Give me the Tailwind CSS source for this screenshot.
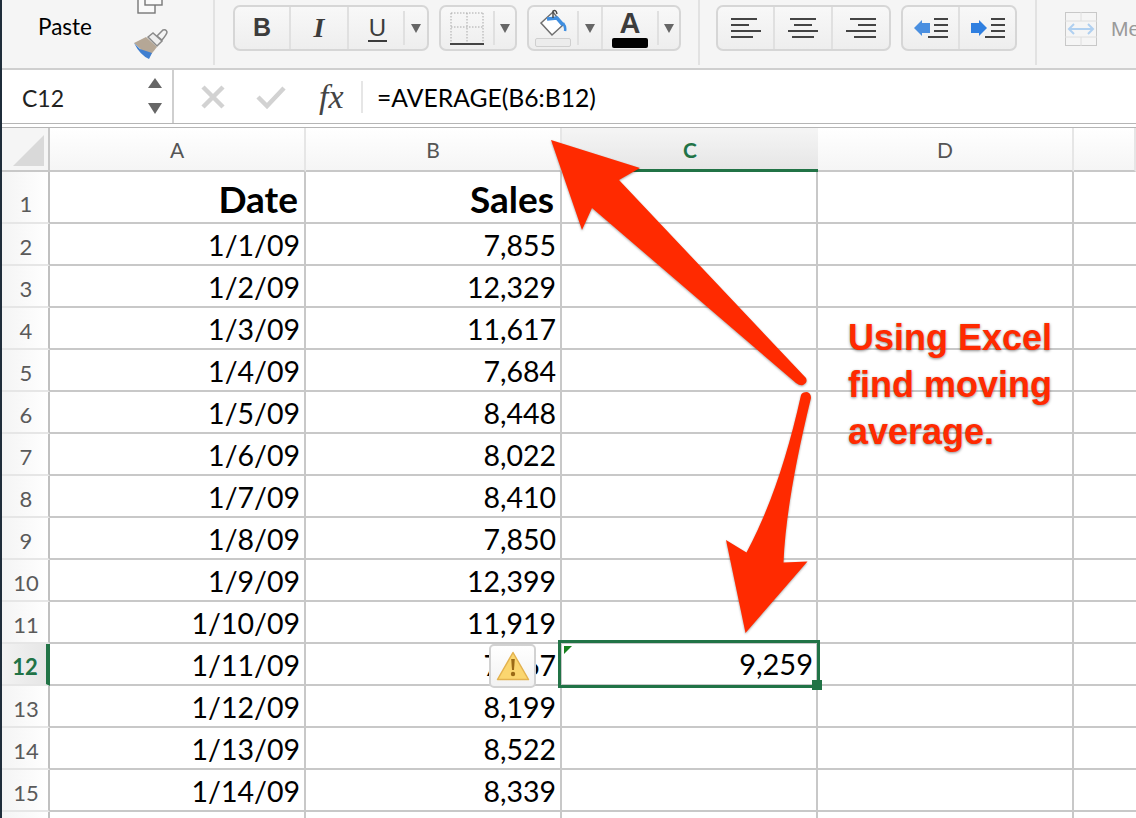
<!DOCTYPE html>
<html lang="en">
<head>
  <meta charset="UTF-8">
  <title>Moving average in Excel</title>
  <script src="https://cdn.jsdelivr.net/npm/@tailwindcss/browser@4"></script>
</head>
<body class="bg-white">
  <div class="relative flex w-[1136px] h-[818px] overflow-hidden font-['Lato',sans-serif]">
    <!-- window edge -->
    <div class="w-[2px] shrink-0 bg-[#1f2d3a]"></div>

    <div class="flex-1 flex flex-col min-w-0">
      <!-- ribbon -->
      <div class="flex h-[70px] shrink-0 bg-[#f5f5f5] border-b-2 border-[#cfcfcf]">
        <div class="relative w-[213px] shrink-0 border-r-2 border-[#e2e2e2] mb-[3px]">
          <span class="absolute left-[36px] top-[14px] text-[22.500px] leading-[26px] text-black">Paste</span>
          <svg class="absolute left-[134px] top-0" width="32" height="14" viewBox="0 0 32 14" fill="#fafafa" stroke="#777" stroke-width="1.4"><rect x="2" y="-6" width="17" height="19"/><rect x="9" y="-10" width="17" height="15"/></svg>
          <svg class="absolute left-[129px] top-[28px]" width="38" height="32" viewBox="0 0 38 32">
            <path d="M26 8 L32 2 Q35 1 36 4 Q36 6 31 12 Z" fill="#f4f4f4" stroke="#8a8a8a" stroke-width="1.5"/>
            <path d="M17 9 L22 5 L31 13 L26 18 Z" fill="#eeeeee" stroke="#8a8a8a" stroke-width="1.5"/>
            <path d="M3 15 L15 9 L26 19 L18 29 Z" fill="#b5a796"/>
            <path d="M3 15 L9 21 L21 25 L18 31 Q9 27 3 15 Z" fill="#3f7fd0"/>
          </svg>
        </div>

        <!-- bold, italic, underline -->
        <div class="ml-[18px] mt-[5px] flex shrink-0 w-[196px] h-[46px] rounded-[7px] border-2 border-[#d6d6d6] bg-linear-to-b from-[#f8f8f8] to-[#eeeeee]">
          <div class="w-[56px] flex items-center justify-center border-r-2 border-[#e0e0e0] font-['Liberation_Sans',sans-serif] font-bold text-[25px] text-[#3c3c3c]">B</div>
          <div class="w-[58px] flex items-center justify-center border-r-2 border-[#e0e0e0] font-['Liberation_Serif',serif] italic font-bold text-[28px] text-[#3c3c3c]">I</div>
          <div class="w-[54px] flex items-center justify-center pl-[3px]"><span class="font-['Liberation_Sans',sans-serif] text-[24px] leading-[25px] text-[#3c3c3c] border-b-2 border-[#3c3c3c] px-[1px]">U</span></div>
          <div class="my-[4px] border-l-2 border-[#e0e0e0]"></div>
          <div class="flex-1 flex items-center justify-center"><svg width="10" height="9"><path d="M0 0H10L5 9Z" fill="#666"/></svg></div>
        </div>

        <!-- borders -->
        <div class="ml-[10px] mt-[5px] flex shrink-0 w-[78px] h-[46px] rounded-[7px] border-2 border-[#d6d6d6] bg-linear-to-b from-[#f8f8f8] to-[#eeeeee]">
          <div class="w-[52px] flex items-center justify-center">
            <svg width="36" height="36" viewBox="0 0 36 36" fill="none" stroke="#a8a8a8" stroke-width="1" stroke-dasharray="1.5 1.5"><path d="M2 3H34M2 3V32M34 3V32M18 3V32M2 17H34"/><path d="M1 34H35" stroke="#444" stroke-width="2" stroke-dasharray="none"/></svg>
          </div>
          <div class="my-[4px] border-l-2 border-[#e0e0e0]"></div>
          <div class="flex-1 flex items-center justify-center"><svg width="10" height="9"><path d="M0 0H10L5 9Z" fill="#666"/></svg></div>
        </div>

        <!-- fill and font colour -->
        <div class="ml-[10px] mt-[5px] flex shrink-0 w-[154px] h-[46px] rounded-[7px] border-2 border-[#d6d6d6] bg-linear-to-b from-[#f8f8f8] to-[#eeeeee]">
          <div class="w-[48px] flex flex-col items-center pt-[2px]">
            <svg width="28" height="28" viewBox="0 0 28 28" fill="none"><path d="M2 14 L14 3 L24 16 L13 26 Z" fill="#fff" stroke="#6f6f6f" stroke-width="1.5"/><path d="M8 10 L18 9 L24 16" stroke="#3f8ee0" stroke-width="3.5"/><path d="M24 14 Q27 18 26 22" stroke="#3f8ee0" stroke-width="2.5"/><path d="M14 9 V2 Q17 0 18 5" stroke="#444" stroke-width="1.4"/></svg>
            <div class="w-[36px] h-[9px] mt-[1px] rounded-[2px] border border-[#cfcfcf] bg-[#ececec]"></div>
          </div>
          <div class="my-[4px] border-l-2 border-[#e0e0e0]"></div>
          <div class="w-[22px] flex items-center justify-center"><svg width="10" height="9"><path d="M0 0H10L5 9Z" fill="#666"/></svg></div>
          <div class="w-[56px] border-l-2 border-[#e0e0e0] flex flex-col items-center">
            <span class="font-['Liberation_Sans',sans-serif] font-bold text-[29px] leading-[29px] mt-[2px] text-[#3c3c3c]">A</span>
            <div class="w-[36px] h-[10px] rounded-[2px] bg-black"></div>
          </div>
          <div class="my-[4px] border-l-2 border-[#e0e0e0]"></div>
          <div class="flex-1 flex items-center justify-center"><svg width="10" height="9"><path d="M0 0H10L5 9Z" fill="#666"/></svg></div>
        </div>

        <div class="ml-[17px] mb-[3px] shrink-0 border-l-2 border-[#e2e2e2]"></div>

        <!-- alignment -->
        <div class="ml-[16px] mt-[5px] flex shrink-0 w-[175px] h-[46px] rounded-[7px] border-2 border-[#d6d6d6] bg-linear-to-b from-[#f8f8f8] to-[#eeeeee]">
          <div class="w-[57px] flex items-center justify-center border-r-2 border-[#e0e0e0]">
            <svg width="30" height="22" viewBox="0 0 30 22" stroke="#444" stroke-width="2"><path d="M0 2H26M0 8H18M0 14H30M0 20H22"/></svg>
          </div>
          <div class="w-[58px] flex items-center justify-center border-r-2 border-[#e0e0e0]">
            <svg width="30" height="22" viewBox="0 0 30 22" stroke="#444" stroke-width="2"><path d="M2 2H28M6 8H24M0 14H30M4 20H26"/></svg>
          </div>
          <div class="flex-1 flex items-center justify-center">
            <svg width="30" height="22" viewBox="0 0 30 22" stroke="#444" stroke-width="2"><path d="M4 2H30M12 8H30M0 14H30M8 20H30"/></svg>
          </div>
        </div>

        <!-- indent -->
        <div class="ml-[10px] mt-[5px] flex shrink-0 w-[116px] h-[46px] rounded-[7px] border-2 border-[#d6d6d6] bg-linear-to-b from-[#f8f8f8] to-[#eeeeee]">
          <div class="w-[57px] flex items-center justify-center border-r-2 border-[#e0e0e0]">
            <svg width="34" height="22" viewBox="0 0 34 22"><path d="M0 11L8 3V6H16V16H8V19Z" fill="#4a8fe0"/><path d="M20 2H34M20 8H34M20 14H34M14 20H34" stroke="#444" stroke-width="2"/></svg>
          </div>
          <div class="flex-1 flex items-center justify-center">
            <svg width="34" height="22" viewBox="0 0 34 22"><path d="M16 11L8 3V6H0V16H8V19Z" fill="#2f7fe0"/><path d="M20 2H34M20 8H34M20 14H34M14 20H34" stroke="#444" stroke-width="2"/></svg>
          </div>
        </div>

        <div class="ml-[18px] mb-[3px] shrink-0 border-l-2 border-[#e2e2e2]"></div>

        <!-- merge -->
        <div class="ml-[28px] mt-[12px] w-[32px] h-[34px] shrink-0">
          <svg width="32" height="34" viewBox="0 0 32 34" fill="none"><rect x=".5" y=".5" width="31" height="33" stroke="#c8c8c8"/><path d="M0 9H32M0 25H32M16 0V9M16 25V34" stroke="#dedede"/><path d="M4 17H28M9 12L4 17L9 22M23 12L28 17L23 22" stroke="#b0d0f0" stroke-width="2"/></svg>
        </div>
        <span class="ml-[14px] mt-[16px] shrink-0 text-[21px] leading-[26px] text-[#9a9a9a] font-['Liberation_Sans',sans-serif]">Me</span>
      </div>

      <!-- formula bar -->
      <div class="flex items-center h-[53px] shrink-0 bg-white">
        <div class="relative flex items-center w-[172px] h-full border-r-2 border-[#cfcfcf] pl-[20px] pt-[3px] text-[23px] text-[#222]">
          C12
          <svg class="absolute left-[146px] top-[8px]" width="14" height="36" viewBox="0 0 14 36" fill="#666"><path d="M7 0L14 10H0Z"/><path d="M0 25H14L7 36Z"/></svg>
        </div>
        <svg class="ml-[27px]" width="24" height="24" viewBox="0 0 24 24" stroke="#d2d2d2" stroke-width="4.5" fill="none"><path d="M2 2L22 22M22 2L2 22"/></svg>
        <svg class="ml-[31px]" width="30" height="24" viewBox="0 0 30 24" stroke="#d2d2d2" stroke-width="4.5" fill="none"><path d="M2 12L11 21L28 3"/></svg>
        <span class="ml-[33px] w-[42px] font-['Liberation_Serif',serif] italic text-[34px] leading-[30px] text-[#444]">fx</span>
        <div class="w-[2px] h-[32px] bg-[#e6e6e6]"></div>
        <span class="ml-[14px] pt-[3px] text-[24.700px] text-black">=AVERAGE(B6:B12)</span>
      </div>

      <!-- double rule -->
      <div class="h-[5px] shrink-0 border-y border-[#b5b5b5] bg-white"></div>

      <!-- sheet -->
      <div id="sheet" class="grid grid-cols-[48px_256px_256px_256px_256px_1fr] grid-rows-[44px_52px_repeat(15,42px)] flex-1 min-h-0"></div>
    </div>

    <!-- warning button beside the cell -->
    <div class="absolute left-[489px] top-[644px] flex items-center justify-center w-[47px] h-[44px] rounded-[5px] border-2 border-[#d2d2d2] bg-linear-to-b from-white to-[#f2f2f2]">
      <svg width="34" height="30" viewBox="0 0 34 30"><path d="M17 1.500 L32.500 28.500 H1.500 Z" fill="#fbd66f" stroke="#e3b24f" stroke-width="1.500" stroke-linejoin="round"/><path d="M15.200 8H18.800L18 19H16Z" fill="#9b6a16"/><circle cx="17" cy="23" r="2.200" fill="#9b6a16"/></svg>
    </div>

    <!-- selected cell C12 -->
    <div class="absolute left-[558px] top-[640px] w-[262px] h-[48px] border-[3px] border-[#217346] flex items-center justify-end pr-[4px] text-[29px] text-black">
      9,259
      <svg class="absolute left-[3px] top-[3px]" width="8" height="8"><path d="M0 0H8L0 8Z" fill="#17801f"/></svg>
      <div class="absolute right-[-5px] bottom-[-5px] w-[10px] h-[10px] bg-[#217346]"></div>
    </div>

    <!-- callout arrows -->
    <svg class="absolute left-0 top-0 pointer-events-none drop-shadow-[0_1px_1px_rgba(0,0,0,0.35)]" width="1136" height="818" viewBox="0 0 1136 818" fill="#ff2a00">
      <path d="M551 140 L640 168 L619 180 L806 378 Q808 383 803 385 Q800 386 796 383 L592 208 L582 230 Z"/>
      <path d="M801 395 Q802 392 807 392 Q811 393 811 398 Q786 500 783.500 562.500 L807.500 561.500 L745.500 633 L726 540 L746.500 552.500 Q780 490 801 395 Z"/>
    </svg>

    <!-- annotation -->
    <div class="absolute left-[848px] top-[314px] font-['Liberation_Sans',sans-serif] font-bold text-[36px] leading-[47px] text-[#ff2a00] [text-shadow:0_1px_3px_rgba(0,0,0,0.45)]">
      Using Excel<br>find moving<br>average.
    </div>
  </div>

  <script>
    var dates = ['1/1/09','1/2/09','1/3/09','1/4/09','1/5/09','1/6/09','1/7/09','1/8/09','1/9/09','1/10/09','1/11/09','1/12/09','1/13/09','1/14/09'];
    var sales = ['7,855','12,329','11,617','7,684','8,448','8,022','8,410','7,850','12,399','11,919','7,767','8,199','8,522','8,339'];

    var headCell = 'flex items-center justify-center pt-[2px] border-r-2 border-b-2 border-r-[#e6e6e6] border-b-[#c8c8c8] bg-linear-to-b from-white to-[#f5f5f5] text-[21px] text-[#555]';
    var headActive = 'flex items-center justify-center pt-[3px] border-b-[3px] border-[#217346] bg-linear-to-b from-[#f5f5f5] to-[#e6e6e6] text-[21px] font-bold text-[#217346]';
    var corner = 'flex items-end justify-end pr-[4px] pb-[4px] border-r-2 border-b-2 border-[#c8c8c8] bg-[#f5f5f5]';
    var rowHead = 'flex items-end justify-center pb-[2px] pl-[2px] border-r-2 border-b-2 border-r-[#c0c0c0] border-b-[#e6e6e6] bg-linear-to-r from-[#f4f4f4] to-white text-[22px] leading-[30px] text-[#5a5a5a]';
    var rowFirst = 'flex items-end justify-center pb-[3px] pl-[2px] border-r-2 border-b-2 border-r-[#c0c0c0] border-b-[#e6e6e6] bg-linear-to-r from-[#f4f4f4] to-white text-[22px] leading-[30px] text-[#5a5a5a]';
    var rowActive = 'relative flex items-end justify-center pb-[2px] pl-[2px] border-r-[4px] border-b-2 border-r-[#217346] border-b-[#e6e6e6] bg-linear-to-r from-[#f2f2f2] to-[#e6e6e6] text-[22px] leading-[30px] font-bold text-[#217346]';
    var cell = 'flex items-center justify-end pr-[4px] pt-[2px] border-r-2 border-b-2 border-[#c8c8c8] text-[28.500px] leading-[38px] text-black';
    var title = 'flex items-center justify-end pr-[6px] pt-[3px] border-r-2 border-b-2 border-[#c8c8c8] text-[37px] font-bold text-black';
    var blank = 'border-r-2 border-b-2 border-[#c8c8c8]';

    function div(cls, text) {
      return '<div class="' + cls + '">' + (text || '') + '</div>';
    }

    var html = div(corner, '<svg width="31" height="31"><path d="M31 0V31H0Z" fill="#d9d9d9"/></svg>');
    html += div(headCell, 'A') + div(headCell, 'B') + div(headActive, 'C') + div(headCell, 'D') + div(headCell);
    html += div(rowFirst, '1') + div(title, 'Date') + div(title, 'Sales') + div(blank) + div(blank) + div('border-b-2 border-[#c8c8c8]');
    for (var i = 0; i < 15; i++) {
      var n = i + 2;
      if (i >= 14) {
        html += div(rowHead) + div(blank) + div(blank) + div(blank) + div(blank) + div('border-b-2 border-[#c8c8c8]');
        continue;
      }
      html += div(n === 12 ? rowActive : rowHead, n) + div(cell, dates[i]) + div(cell, sales[i]) + div(blank) + div(blank) + div('border-b-2 border-[#c8c8c8]');
    }
    document.getElementById('sheet').innerHTML = html;
  </script>
</body>
</html>
